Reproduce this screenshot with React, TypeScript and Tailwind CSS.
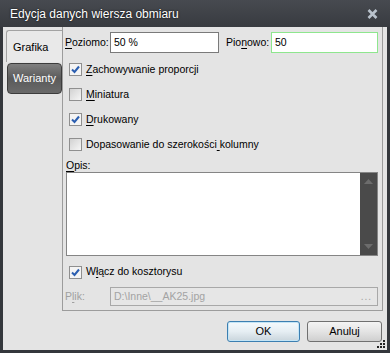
import React from 'react';

function Key({ text, k }: { text: string; k: number }) {
  return (
    <>
      {text.slice(0, k)}
      <span className="underline underline-offset-2">{text.slice(k, k + 1)}</span>
      {text.slice(k + 1)}
    </>
  );
}

function CheckBox({ checked }: { checked: boolean }) {
  return (
    <span
      className={
        'w-[13px] h-[13px] border border-[#8f8f8f] flex items-center justify-center ' +
        (checked ? 'bg-[#f4f4f4]' : 'bg-gradient-to-br from-[#d2d2d2] to-[#f6f6f6]')
      }
    >
      {checked && (
        <svg width="9" height="9" viewBox="0 0 9 9">
          <path d="M1 4.5 L3.5 7 L8 1.5" fill="none" stroke="#2b5eb0" strokeWidth="2" />
        </svg>
      )}
    </span>
  );
}

function CheckRow({ label, k, checked }: { label: string; k: number; checked: boolean }) {
  return (
    <div className="h-[25px] flex items-center gap-[4px] pl-[4px]">
      <CheckBox checked={checked} />
      <span>
        <Key text={label} k={k} />
      </span>
    </div>
  );
}

export default function App() {
  return (
    <div className="w-[390px] h-[353px] bg-[#34373c] flex flex-col font-['Liberation_Sans',Arial,sans-serif] text-[10.5px] text-black select-none">
      {/* title bar */}
      <div className="h-[27px] flex items-center justify-between pl-[10px] pr-[10px] bg-gradient-to-b from-[#474a50] to-[#383b40]">
        <span className="text-[12px] text-white [text-shadow:0_0_2px_#000]">Edycja danych wiersza obmiaru</span>
        <svg width="11" height="10" viewBox="0 0 11 10" className="mr-[2px]">
          <path d="M1.5 1 L9.5 9 M9.5 1 L1.5 9" stroke="#b9c2cc" strokeWidth="2.6" />
        </svg>
      </div>

      <div className="flex-1 mx-[3px] mb-[3px] bg-[#e4e4e4] flex flex-col relative">
        <div className="flex">
          {/* tabs */}
          <div className="w-[59px] pl-[3px] pt-[3px] flex flex-col">
            <div className="h-[32px] bg-[#e9e9e9] border-t border-l border-[#a3a3a3] rounded-tl-[3px] flex items-center pl-[6px] pt-[2px] text-[11px]">
              Grafika
            </div>
            <div className="h-[31px] ml-[1px] mt-[1px] rounded-[4px] border border-[#3c3c3c] bg-gradient-to-b from-[#808080] via-[#5a5a5a] to-[#6a6a6a] flex items-center pl-[5px] text-[11px] text-white">
              Warianty
            </div>
          </div>

          {/* panel */}
          <div className="flex-1 mr-[4px] border-l border-r border-b border-[#9c9c9c] h-[284px] pl-[2px] pr-[4px] pt-[5px] flex flex-col">
            <div className="flex items-center h-[21px]">
              <span className="w-[45px]">
                <Key text="Poziomo:" k={0} />
              </span>
              <div className="w-[109px] h-[21px] bg-white border border-[#7a7a7a] flex items-center pl-[3px]">50 %</div>
              <span className="ml-[7px] w-[45px]">
                <Key text="Pionowo:" k={3} />
              </span>
              <div className="flex-1 h-[21px] bg-white border border-[#8ee68e] flex items-center pl-[3px]">50</div>
            </div>
            <div className="mt-[4px]">
              <CheckRow label="Zachowywanie proporcji" k={0} checked />
              <CheckRow label="Miniatura" k={0} checked={false} />
              <CheckRow label="Drukowany" k={0} checked />
              <CheckRow label="Dopasowanie do szerokości kolumny" k={25} checked={false} />
            </div>
            <div className="h-[15px] flex items-end pl-[1px]">
              <span className="leading-[13px]">
                <Key text="Opis:" k={0} />
              </span>
            </div>
            <div className="h-[84px] ml-[1px] bg-white border border-[#858585] flex justify-end">
              <div className="w-[17px] bg-[#4a4a4a] flex flex-col items-center justify-between py-[6px]">
                <svg width="9" height="5" viewBox="0 0 9 5">
                  <path d="M0 5 L4.5 0 L9 5 Z" fill="#6c6c6c" />
                </svg>
                <svg width="9" height="5" viewBox="0 0 9 5">
                  <path d="M0 0 L4.5 5 L9 0 Z" fill="#6c6c6c" />
                </svg>
              </div>
            </div>
            <div className="mt-[4px] h-[24px] flex items-center gap-[4px] pl-[4px]">
              <CheckBox checked />
              <span>
                <Key text="Włącz do kosztorysu" k={1} />
              </span>
            </div>
            <div className="mt-[3px] flex items-center h-[19px] text-[#a0a0a0]">
              <span className="w-[45px]">
                <Key text="Plik:" k={1} />
              </span>
              <div className="flex-1 h-[19px] border border-[#a8a8a8] bg-[#e6e6e6] flex items-center justify-between pl-[3px] pr-[5px] text-[#a3a3a3]">
                <span>D:\Inne\__AK25.jpg</span>
                <span className="tracking-[1px] text-[10px]">...</span>
              </div>
            </div>
          </div>
        </div>

        {/* buttons */}
        <div className="flex justify-end gap-[7px] pr-[5px] mt-[10px]">
          <button className="w-[73px] h-[21px] rounded-[3px] border border-[#3c7fb1] bg-gradient-to-b from-[#f4fafd] via-[#e6eef3] to-[#c9d5dc] text-[11px] shadow-[inset_0_0_0_1px_#c4e5f6]">
            OK
          </button>
          <button className="w-[75px] h-[21px] rounded-[3px] border border-[#707070] bg-gradient-to-b from-[#f4f4f4] via-[#e4e4e4] to-[#cfcfcf] text-[11px]">
            Anuluj
          </button>
        </div>

        <svg width="10" height="10" viewBox="0 0 10 10" className="absolute right-[1px] bottom-[1px]">
          <rect x="7" y="1" width="2" height="2" fill="#222" />
          <rect x="4" y="4" width="2" height="2" fill="#222" />
          <rect x="7" y="4" width="2" height="2" fill="#222" />
          <rect x="1" y="7" width="2" height="2" fill="#222" />
          <rect x="4" y="7" width="2" height="2" fill="#222" />
          <rect x="7" y="7" width="2" height="2" fill="#222" />
        </svg>
      </div>
    </div>
  );
}
